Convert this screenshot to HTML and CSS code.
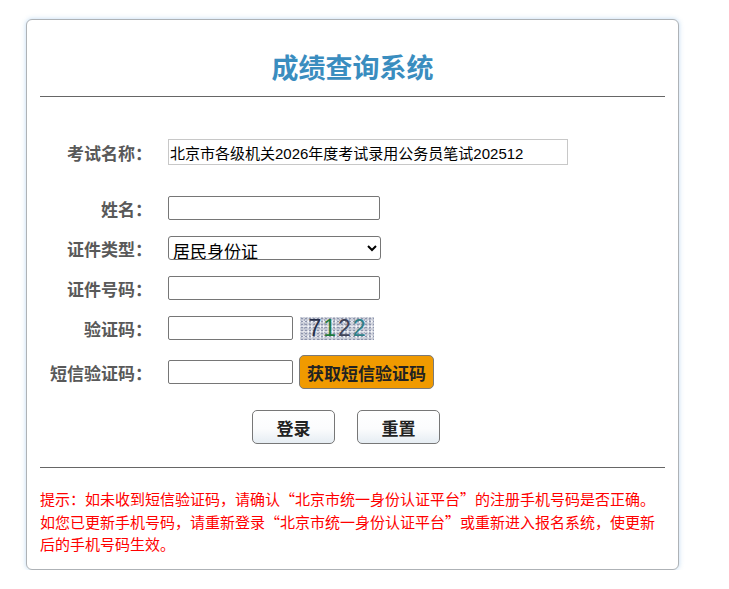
FILE: index.html
```html
<!DOCTYPE html>
<html lang="zh-CN">
<head>
<meta charset="utf-8">
<title>成绩查询系统</title>
<link rel="stylesheet" href="styles.css">
</head>
<body>
<div class="card">
  <h1 class="title">成绩查询系统</h1>
  <div class="rule"></div>
  <form class="form">
    <div class="row row-exam">
      <label class="label">考试名称：</label>
      <input class="exam" type="text" readonly value="北京市各级机关2026年度考试录用公务员笔试202512">
    </div>
    <div class="row row-name">
      <label class="label">姓名：</label>
      <input class="field" type="text">
    </div>
    <div class="row">
      <label class="label">证件类型：</label>
      <select class="select"><option>居民身份证</option></select>
    </div>
    <div class="row">
      <label class="label">证件号码：</label>
      <input class="field" type="text">
    </div>
    <div class="row">
      <label class="label">验证码：</label>
      <input class="field short" type="text">
      <div class="captcha"><span class="d1">7</span><span class="d2">1</span><span class="d3">2</span><span class="d4">2</span></div>
    </div>
    <div class="row row-sms">
      <label class="label">短信验证码：</label>
      <input class="field short" type="text">
      <button class="sms" type="button">获取短信验证码</button>
    </div>
    <div class="row row-actions">
      <button class="btn" type="button">登录</button>
      <button class="btn" type="button">重置</button>
    </div>
  </form>
  <div class="rule rule-bottom"></div>
  <p class="note">提示：如未收到短信验证码，请确认“北京市统一身份认证平台”的注册手机号码是否正确。如您已更新手机号码，请重新登录“北京市统一身份认证平台”或重新进入报名系统，使更新后的手机号码生效。</p>
</div>
</body>
</html>
```

FILE: styles.css
```css
html, body {
  margin: 0;
  background: #ffffff;
}
body {
  padding: 19px 0 0 26px;
  font-family: "Liberation Sans", "Noto Sans CJK SC", sans-serif;
}
.card {
  box-sizing: border-box;
  width: 653px;
  height: 551px;
  border: 1px solid #aeb2b6;
  border-radius: 6px;
  box-shadow: 0 0 5px rgba(110, 170, 225, 0.45);
  padding: 0 13px;
  background: #fff;
}
.title {
  margin: 0;
  padding-top: 29px;
  line-height: 35px;
  font-size: 27px;
  font-weight: bold;
  color: #3a8dbf;
  text-align: center;
  font-family: "Noto Sans CJK SC", sans-serif;
}
.rule {
  margin-top: 12px;
  height: 1px;
  background: #666;
}
.rule-bottom {
  margin-top: 23px;
}
.form {
  margin: 42px 0 0 0;
  display: flex;
  flex-direction: column;
  gap: 16px;
}
.row {
  display: flex;
  align-items: center;
  height: 24px;
}
.row-exam {
  height: 26px;
}
.row-name {
  margin-top: 15px;
}
.row-sms {
  height: 34px;
  margin-top: -1px;
}
.row-actions {
  height: 34px;
  margin-top: 5px;
  padding-left: 212px;
  gap: 22px;
}
.label {
  width: 112px;
  margin-right: 16px;
  text-align: right;
  font-family: "Noto Sans CJK SC", sans-serif;
  font-size: 17px;
  font-weight: bold;
  color: #595959;
  white-space: nowrap;
}
.exam {
  box-sizing: border-box;
  width: 400px;
  height: 26px;
  border: 1px solid #c8c8c8;
  border-radius: 0;
  padding: 0 0 0 1px;
  font-family: "Liberation Sans", "Noto Sans CJK SC", sans-serif;
  font-size: 15px;
  color: #000;
  outline: none;
}
.field {
  box-sizing: border-box;
  width: 212px;
  height: 24px;
  border: 1px solid #767676;
  border-radius: 2px;
  padding: 0 4px;
  font-size: 15px;
  background: #fff;
}
.field.short {
  width: 125px;
}
.select {
  box-sizing: border-box;
  width: 213px;
  height: 24px;
  border: 1px solid #767676;
  border-radius: 3px;
  padding: 0;
  font-family: "Noto Sans CJK SC", sans-serif;
  font-size: 17px;
  color: #000;
  background-color: #fff;
}
.captcha {
  box-sizing: border-box;
  width: 74px;
  height: 23px;
  margin-left: 7px;
  display: flex;
  align-items: center;
  justify-content: center;
  gap: 2px;
  font-family: "Liberation Sans", sans-serif;
  font-size: 23px;
  line-height: 23px;
  background-color: #cdd0da;
  background-image:
    radial-gradient(circle, #8e95ad 0.8px, transparent 1.2px),
    radial-gradient(circle, #f4f5f8 0.9px, transparent 1.3px),
    radial-gradient(circle, #a9aec0 0.7px, transparent 1.1px);
  background-size: 4px 3px, 3px 5px, 5px 4px;
  background-position: 0 0, 1px 2px, 2px 1px;
}
.d1 { color: #27304a; }
.d2 { color: #1d7a3a; }
.d3 { color: #3f4458; }
.d4 { color: #2f7f86; }
.sms {
  box-sizing: border-box;
  height: 34px;
  width: 135px;
  margin-left: 6px;
  padding: 0;
  border: 1px solid #7a7a7a;
  border-radius: 5px;
  background: #f09a00;
  font-family: "Noto Sans CJK SC", sans-serif;
  font-size: 17px;
  font-weight: bold;
  color: #222;
}
.btn {
  box-sizing: border-box;
  width: 83px;
  height: 34px;
  padding: 0;
  border: 1px solid #777;
  border-radius: 5px;
  background: linear-gradient(#ffffff 0%, #fbfcfd 55%, #e6edf3 100%);
  font-family: "Noto Sans CJK SC", sans-serif;
  font-size: 17px;
  font-weight: bold;
  color: #222;
}
.note {
  margin: 20px 0 0 0;
  font-family: "Noto Sans CJK SC", sans-serif;
  font-feature-settings: "fwid";
  font-size: 15px;
  line-height: 22.5px;
  color: #ff0000;
}
```
